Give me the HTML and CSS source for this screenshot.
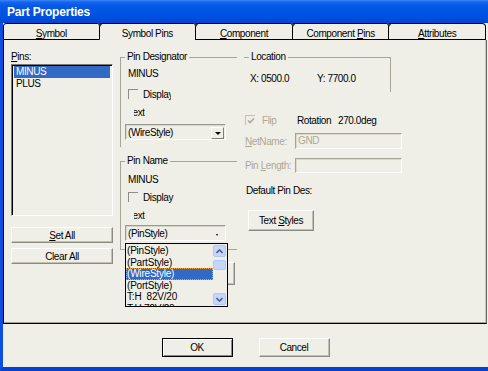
FILE: index.html
```html
<!DOCTYPE html>
<html lang="en">
<head>
    <meta charset="UTF-8">
    <title>Part Properties</title>
    <link rel="stylesheet" href="styles.css">
</head>
<body>
    <div class="window">
        <div class="titlebar">Part Properties</div>
        <div class="frame">
            <div class="tabs">
                <div class="tab first"><u>S</u>ymbol</div>
                <div class="tab active">Symbol Pins</div>
                <div class="tab"><u>C</u>omponent</div>
                <div class="tab">Component <u>P</u>ins</div>
                <div class="tab last"><u>A</u>ttributes</div>
            </div>

            <div class="panel">
                <div class="col-pins">
                    <div class="label"><u>P</u>ins:</div>
                    <div class="listbox">
                        <div class="item selected">MINUS</div>
                        <div class="item">PLUS</div>
                    </div>
                    <button class="btn wide set-all"><u>S</u>et All</button>
                    <button class="btn wide clear-all">Clear All</button>
                </div>

                <div class="col-groups">
                    <fieldset class="group designator">
                        <legend>Pin Designator</legend>
                        <div class="value">MINUS</div>
                        <div class="check-row">
                            <span class="checkbox"></span>
                            <span class="clip">Display</span>
                        </div>
                        <div class="sub-label"><span>Text</span></div>
                        <div class="select">
                            <span>(WireStyle)</span>
                            <span class="drop-btn"></span>
                        </div>
                    </fieldset>

                    <fieldset class="group pin-name">
                        <legend>Pin Name</legend>
                        <div class="value">MINUS</div>
                        <div class="check-row">
                            <span class="checkbox"></span>
                            <span>Display</span>
                        </div>
                        <div class="sub-label"><span>Text</span></div>
                        <div class="select open">
                            <span>(PinStyle)</span>
                            <span class="tiny-arrow"></span>
                            <div class="droplist">
                                <div class="options">
                                    <div class="option">(PinStyle)</div>
                                    <div class="option">(PartStyle)</div>
                                    <div class="option current">(WireStyle)</div>
                                    <div class="option">(PortStyle)</div>
                                    <div class="option">T:H&nbsp;&nbsp;82V/20</div>
                                    <div class="option">T:H 72V/20</div>
                                </div>
                                <div class="scrollbar">
                                    <span class="sb-btn">
                                        <svg width="7" height="5" viewBox="0 0 7 5"><path d="M0.5 4 L3.5 1 L6.5 4" fill="none" stroke="#4d6185" stroke-width="1.6"/></svg>
                                    </span>
                                    <span class="sb-thumb"></span>
                                    <span class="sb-space"></span>
                                    <span class="sb-btn">
                                        <svg width="7" height="5" viewBox="0 0 7 5"><path d="M0.5 1 L3.5 4 L6.5 1" fill="none" stroke="#4d6185" stroke-width="1.6"/></svg>
                                    </span>
                                </div>
                            </div>
                        </div>
                    </fieldset>

                    <button class="btn hidden-btn"></button>
                </div>

                <div class="col-info">
                    <fieldset class="group location">
                        <legend>Location</legend>
                        <div class="xy">
                            <span class="x">X: 0500.0</span>
                            <span>Y: 7700.0</span>
                        </div>
                    </fieldset>

                    <div class="flip-row">
                        <span class="checkbox checked">
                            <svg width="8" height="8" viewBox="0 0 8 8"><path d="M1 3.5 L3 5.5 L7 1.5" fill="none" stroke="#aca899" stroke-width="1.6"/></svg>
                        </span>
                        <span class="flip disabled">Flip</span>
                        <span class="rot">Rotation</span>
                        <span>270.0deg</span>
                    </div>

                    <div class="field-row net">
                        <span class="field-label disabled"><u>N</u>etName:</span>
                        <span class="input">GND</span>
                    </div>

                    <div class="field-row len">
                        <span class="field-label disabled">Pin <u>L</u>ength:</span>
                        <span class="input"></span>
                    </div>

                    <div class="default-des">Default Pin Des:</div>

                    <button class="btn styles">Text <u>S</u>tyles</button>
                </div>
            </div>

            <div class="actions">
                <button class="btn dialog default">OK</button>
                <button class="btn dialog">Cancel</button>
            </div>
        </div>
    </div>
</body>
</html>
```

FILE: styles.css
```css
body {
    margin: 0;
    font-family: "Liberation Sans", Arial, sans-serif;
    font-size: 10px;
    letter-spacing: -0.4px;
    color: #000;
    background: #f0efe7;
    overflow: hidden;
}

.window {
    width: 488px;
    height: 371px;
}

.titlebar {
    height: 23px;
    box-sizing: border-box;
    padding-left: 7px;
    line-height: 24px;
    font-size: 12px;
    font-weight: bold;
    letter-spacing: -0.2px;
    color: #fff;
    background: linear-gradient(#3d86f6 0, #1466ee 2px, #0558e6 6px, #0053e1 60%, #004bd9 90%, #0742c6 100%);
}

.frame {
    height: 348px;
    box-sizing: border-box;
    border-left: 3px solid #0a4fe2;
    border-bottom: 4px solid #0740cf;
    background: #f0efe7;
}

/* tabs */
.tabs {
    display: grid;
    grid-template-columns: repeat(5, 1fr);
    width: 483px;
    height: 17px;
}

.tab {
    position: relative;
    box-sizing: border-box;
    height: 17px;
    padding-top: 4px;
    line-height: 11px;
    text-align: center;
    border-top: 1px solid #000;
    border-right: 1px solid #000;
    border-bottom: 1px solid #000;
}

.tab.first {
    border-left: 1px solid #000;
    border-top-left-radius: 3px;
}

.tab.last {
    border-top-right-radius: 4px;
}

.tab.active {
    border-bottom: none;
}

.tab::after {
    content: "";
    position: absolute;
    right: -4px;
    top: -1px;
    border-left: 3px solid transparent;
    border-right: 3px solid transparent;
    border-top: 4px solid #3a3a3a;
}

.tab.last::after {
    display: none;
}

u {
    text-decoration: underline;
}

/* main panel */
.panel {
    display: grid;
    grid-template-columns: 102px 117px 1fr;
    column-gap: 7px;
    width: 484px;
    height: 284px;
    box-sizing: border-box;
    padding: 11px 0 0 7px;
    border-left: 1px solid #000;
    border-right: 1px solid #6f6e66;
    border-bottom: 1px solid #000;
    box-shadow: inset 0 -1px #a3a294, inset -1px 0 #c8c6b8;
}

.label {
    line-height: 12px;
}

.listbox {
    margin-top: 1px;
    height: 152px;
    box-sizing: border-box;
    padding: 1px 2px 0 1px;
    border: 1px solid;
    border-color: #7b7a70 #fff #fff #7b7a70;
    box-shadow: inset 1px 1px #000;
}

.item {
    height: 12px;
    line-height: 12px;
    padding-left: 2px;
    margin-left: 1px;
}

.item.selected {
    background: #316ac5;
    color: #fff;
}

.btn {
    display: block;
    box-sizing: border-box;
    margin: 0;
    padding: 0;
    font-family: inherit;
    font-size: 10px;
    letter-spacing: -0.4px;
    color: #000;
    background: #f0efe7;
    border: 1px solid;
    border-color: #fff #8c8b80 #8c8b80 #fff;
    box-shadow: inset -1px -1px #c2c0b2;
}

.btn.wide {
    width: 102px;
    height: 16px;
}

.set-all {
    margin-top: 11px;
}

.clear-all {
    margin-top: 5px;
}

/* group boxes */
.group {
    margin: 0;
    min-width: 0;
    box-sizing: border-box;
    border: 0;
    border-top: 1px solid #a6a597;
}

.group legend {
    padding: 0 2px;
    line-height: 12px;
}

.designator,
.pin-name {
    width: 117px;
    padding: 0 0 7px 4px;
    border-left: 1px solid #a6a597;
}

.pin-name {
    margin-top: 8px;
    padding-bottom: 8px;
    border-bottom: 1px solid #a6a597;
}

.value {
    margin: 5px 0 0 3px;
    line-height: 12px;
}

.pin-name .value {
    margin-top: 7px;
}

.check-row {
    display: flex;
    align-items: center;
    gap: 5px;
    height: 12px;
    margin: 8px 0 0 3px;
}

.pin-name .check-row {
    margin-top: 5px;
}

.checkbox {
    display: flex;
    align-items: center;
    justify-content: center;
    width: 10px;
    height: 10px;
    box-sizing: border-box;
    border-top: 1px solid #8e8d82;
    border-left: 1px solid #8e8d82;
}

.clip {
    display: inline-block;
    width: 28px;
    overflow: hidden;
    white-space: nowrap;
}

.sub-label {
    margin: 7px 0 0 3px;
    line-height: 12px;
}

.sub-label span {
    display: inline-block;
    clip-path: inset(0 0 0 6px);
}

.select {
    position: relative;
    display: flex;
    align-items: center;
    width: 101px;
    height: 16px;
    margin-top: 5px;
    box-sizing: border-box;
    padding-left: 2px;
    border: 1px solid;
    border-color: #9c9b90 #fff #fff #9c9b90;
    box-shadow: inset 1px 1px #d6d4c8;
}

.pin-name .select {
    margin-top: 3px;
}

.drop-btn {
    position: absolute;
    right: 1px;
    top: 2px;
    width: 13px;
    height: 12px;
    box-sizing: border-box;
    border: 1px solid;
    border-color: #fff #7f7e74 #7f7e74 #fff;
}

.drop-btn::after {
    content: "";
    position: absolute;
    left: 3px;
    top: 4px;
    border-left: 3px solid transparent;
    border-right: 3px solid transparent;
    border-top: 3px solid #000;
}

.tiny-arrow {
    position: absolute;
    right: 7px;
    top: 8px;
    border-left: 1px solid transparent;
    border-right: 1px solid transparent;
    border-top: 2px solid #000;
}

/* open drop-down list */
.droplist {
    position: absolute;
    left: -1px;
    top: 17px;
    z-index: 2;
    display: flex;
    width: 103px;
    height: 64px;
    box-sizing: border-box;
    border: 1px solid #000;
    background: #f0efe7;
}

.options {
    flex: 1;
    overflow: hidden;
    padding-top: 1px;
}

.option {
    height: 11.5px;
    line-height: 11.5px;
    padding-left: 1px;
    white-space: nowrap;
    letter-spacing: -0.2px;
}

.option.current {
    background: #316ac5;
    color: #fff;
    outline: 1px dotted #f2a43a;
    outline-offset: -1px;
}

.scrollbar {
    display: flex;
    flex-direction: column;
    width: 13px;
    padding: 1px 1px 1px 0;
}

.sb-btn,
.sb-thumb {
    display: flex;
    align-items: center;
    justify-content: center;
    height: 12px;
    box-sizing: border-box;
    border: 1px solid #b4c6f2;
    border-radius: 2px;
    background: #c5d5fc;
}

.sb-thumb {
    margin-top: 3px;
    height: 10px;
}

.sb-space {
    flex: 1;
}

.hidden-btn {
    width: 110px;
    height: 23px;
    margin: 12px 0 0 5px;
}

/* right column */
.location {
    width: 147px;
    padding: 0 0 7px 5px;
    border-right: 1px solid #a6a597;
}

.xy {
    display: flex;
    margin: 10px 0 0 1px;
    line-height: 12px;
}

.xy .x {
    width: 67px;
}

.flip-row {
    display: flex;
    align-items: center;
    height: 12px;
    margin: 22px 0 0 1px;
}

.checkbox.checked {
    border-color: #c3c1b4;
}

.flip {
    width: 35px;
    margin-left: 7px;
}

.rot {
    width: 41px;
}

.disabled {
    color: #aca899;
}

.field-row {
    display: flex;
    align-items: center;
    margin: 7px 0 0 1px;
}

.field-row.len {
    margin-top: 9px;
}

.field-label {
    width: 50px;
    white-space: nowrap;
}

.input {
    width: 107px;
    height: 16px;
    box-sizing: border-box;
    padding: 1px 0 0 2px;
    line-height: 12px;
    color: #aca899;
    border: 1px solid;
    border-color: #a3a296 #fff #fff #a3a296;
    box-shadow: inset 1px 1px #dcdacd;
}

.len .input {
    height: 15px;
}

.default-des {
    margin: 12px 0 0 2px;
    line-height: 12px;
}

.btn.styles {
    width: 66px;
    height: 21px;
    margin: 13px 0 0 4px;
}

/* dialog buttons */
.actions {
    display: flex;
    justify-content: center;
    gap: 26px;
    padding-top: 14px;
}

.btn.dialog {
    width: 71px;
    height: 19px;
}

.btn.default {
    border: 1px solid #000;
    box-shadow: inset 1px 1px #fff, inset -1px -1px #8c8b80;
}
```
